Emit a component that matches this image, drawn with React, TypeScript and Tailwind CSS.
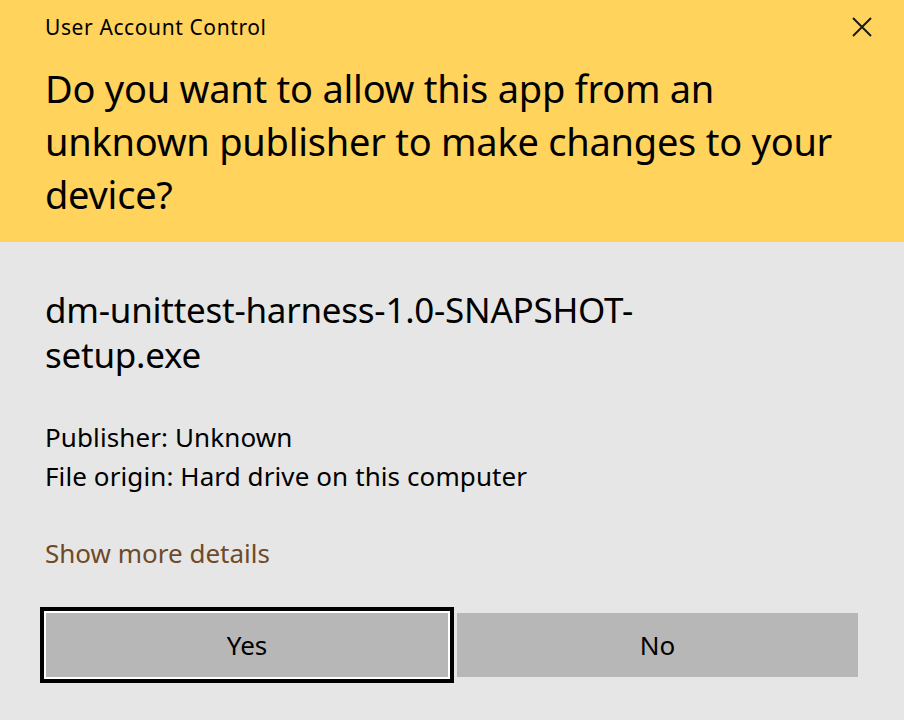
export default function App() {
  return (
    <div
      className="w-[904px] h-[720px] flex flex-col bg-[#e6e6e6] text-black overflow-hidden"
      style={{ fontFamily: '"Noto Sans", "Open Sans", sans-serif' }}
    >
      <div className="h-[242px] bg-[#ffd35c] px-[45px] pt-[13px]">
        <div className="flex items-center justify-between h-[28px]">
          <span className="text-[21px] leading-[28px] tracking-[0.6px]">User Account Control</span>
          <svg width="20" height="20" viewBox="0 0 20 20" className="mr-[-13px]">
            <path d="M1 1 L19 19 M19 1 L1 19" stroke="#1a1a1a" strokeWidth="2" />
          </svg>
        </div>
        <h1 className="mt-[21px] w-[800px] text-[38px] leading-[53px] tracking-[-0.25px] font-normal">
          Do you want to allow this app from an unknown publisher to make changes to your device?
        </h1>
      </div>

      <div className="px-[45px] pt-[45px]">
        <p className="text-[35px] leading-[45px] tracking-[-0.25px] w-[640px]">
          dm-unittest-harness-1.0-SNAPSHOT-setup.exe
        </p>
        <div className="mt-[41px] text-[26px] leading-[39px] tracking-[0.1px]">
          <p>Publisher: Unknown</p>
          <p>File origin: Hard drive on this computer</p>
        </div>
        <button className="mt-[38px] block text-[26px] leading-[39px] text-[#6f4a28]">
          Show more details
        </button>
      </div>

      <div className="flex gap-[3px] pl-[40px] pr-[46px] mt-[34px] items-center">
        <div className="border-[4px] border-black bg-white p-[2px] w-[414px]">
          <button className="w-full h-[64px] bg-[#b7b7b7] text-[26px]">Yes</button>
        </div>
        <button className="flex-1 h-[64px] bg-[#b7b7b7] text-[26px]">No</button>
      </div>
    </div>
  )
}
